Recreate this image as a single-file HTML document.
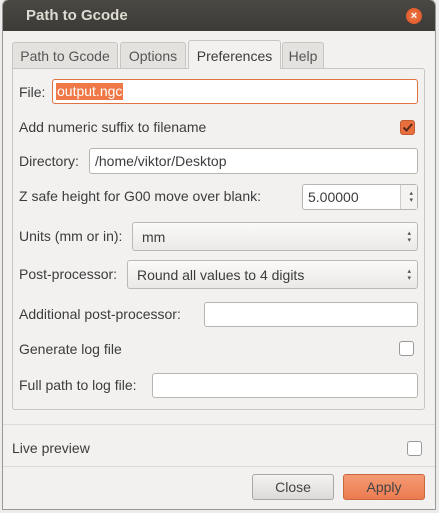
<!DOCTYPE html><html><head><style>
body{margin:0;width:439px;height:513px;background:#ececec;font-family:"Liberation Sans","DejaVu Sans",sans-serif;position:relative;overflow:hidden}
.win{position:absolute;left:3px;top:0;width:432px;height:509px;background:#f2f1f0;border-radius:6px 6px 0 0;overflow:hidden;box-shadow:0 0 0 1px #9a9894}
.tb{position:absolute;left:0;top:0;right:0;height:31px;background:linear-gradient(#4a4843,#3c3b37);}
.tb span{position:absolute;left:23px;top:7px;color:#dfdbd2;font-size:15px;font-weight:bold}
.cl{position:absolute;left:403px;top:8px;width:16px;height:16px;border-radius:50%;background:radial-gradient(#f07a4a,#d9501f);color:#fff;font-size:11px;text-align:center;line-height:16px;font-weight:bold}
.a{position:absolute;font-size:14px;color:#3c3c3c;white-space:nowrap}
.tab{position:absolute;top:42px;height:26px;background:#e4e2df;border:1px solid #c8c6c2;border-bottom:none;border-radius:3px 3px 0 0;font-size:14px;color:#555;text-align:center;line-height:26px;box-sizing:border-box}
.panel{position:absolute;left:9px;top:68px;width:413px;height:342px;border:1px solid #c8c6c2;border-radius:0 3px 3px 3px;box-sizing:border-box;background:#f2f1f0}
.e{position:absolute;background:#fff;border:1px solid #b8b5b0;border-radius:3px;box-sizing:border-box}
.c{position:absolute;background:linear-gradient(#fafaf9,#ebe9e7);border:1px solid #bcb9b4;border-radius:3px;box-sizing:border-box}
.ar{position:absolute;right:6px;top:50%;transform:translateY(-50%);font-size:7px;line-height:7px;color:#555;text-align:center}
.cb{position:absolute;width:15px;height:15px;border:1px solid #999;border-radius:3px;background:#fff;box-sizing:border-box}
.sep{position:absolute;left:0;right:0;height:1px;background:#dcdad6}
.btn{position:absolute;top:474px;height:26px;width:82px;border-radius:3px;box-sizing:border-box;font-size:14px;text-align:center;line-height:24px;color:#444}
</style></head><body>
<div class="win">
<div class="tb"><span>Path to Gcode</span><div class="cl">×</div></div>
<div class="tab" style="left:9px;width:106px">Path to Gcode</div>
<div class="tab" style="left:117px;width:66px">Options</div>
<div class="tab" style="left:279px;width:42px">Help</div>
<div class="panel"></div>
<div class="tab" style="left:185px;top:40px;height:29px;width:93px;background:#f2f1f0;color:#3c3c3c;line-height:30px">Preferences</div>
<div class="a" style="left:16px;top:84px">File:</div>
<div class="e" style="left:49px;top:79px;width:366px;height:25px;border-color:#e0733f"><span style="position:absolute;left:3px;top:3px;background:#f07746;color:#fff;font-size:14px;padding:0 1px;line-height:17px">output.ngc</span></div>
<div class="a" style="left:16px;top:119px">Add numeric suffix to filename</div>
<div class="cb" style="left:397px;top:120px;background:#e8703f;border-color:#c45a2e"><svg width="13" height="13" style="position:absolute;left:0;top:0"><path d="M2.5 6.5 L5.5 9.5 L11 3" stroke="#5a2a18" stroke-width="2" fill="none"/></svg></div>
<div class="a" style="left:16px;top:153px">Directory:</div>
<div class="e" style="left:86px;top:148px;width:329px;height:26px"><span class="a" style="left:5px;top:4px">/home/viktor/Desktop</span></div>
<div class="a" style="left:16px;top:188px">Z safe height for G00 move over blank:</div>
<div class="e" style="left:299px;top:184px;width:116px;height:26px"><span class="a" style="left:5px;top:4px">5.00000</span><div style="position:absolute;right:0;top:0;width:16px;height:24px;border-left:1px solid #ccc;background:#f4f3f2"><div class="ar" style="right:4px">▴<br>▾</div></div></div>
<div class="a" style="left:16px;top:228px">Units (mm or in):</div>
<div class="c" style="left:129px;top:222px;width:286px;height:29px"><span class="a" style="left:9px;top:6px">mm</span><div class="ar">▴<br>▾</div></div>
<div class="a" style="left:16px;top:266px">Post-processor:</div>
<div class="c" style="left:124px;top:260px;width:291px;height:29px"><span class="a" style="left:9px;top:6px">Round all values to 4 digits</span><div class="ar">▴<br>▾</div></div>
<div class="a" style="left:16px;top:306px">Additional post-processor:</div>
<div class="e" style="left:201px;top:302px;width:214px;height:25px"></div>
<div class="a" style="left:16px;top:341px">Generate log file</div>
<div class="cb" style="left:396px;top:341px"></div>
<div class="a" style="left:16px;top:377px">Full path to log file:</div>
<div class="e" style="left:149px;top:373px;width:266px;height:25px"></div>
<div class="sep" style="top:424px"></div>
<div class="a" style="left:9px;top:440px">Live preview</div>
<div class="cb" style="left:404px;top:441px"></div>
<div class="sep" style="top:466px"></div>
<div class="btn" style="left:249px;background:linear-gradient(#f4f3f2,#dddbd8);border:1px solid #aaa7a2">Close</div>
<div class="btn" style="left:340px;background:linear-gradient(#f49a74,#ec7b50);border:1px solid #c8663f">Apply</div>
</div>
</body></html>
